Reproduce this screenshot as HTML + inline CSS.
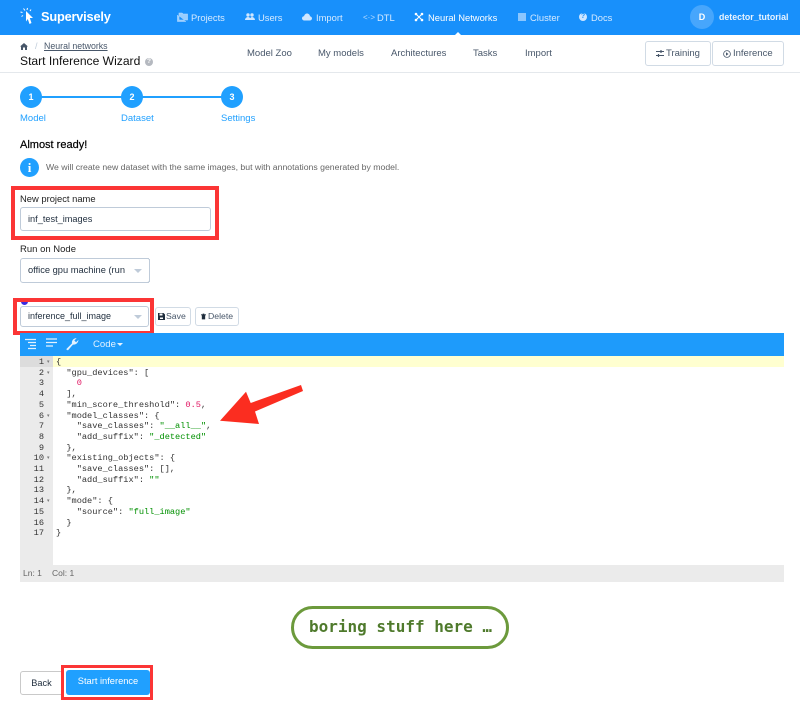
<!DOCTYPE html>
<html><head><meta charset="utf-8">
<style>
html,body{margin:0;padding:0;background:#fff}
#p{position:relative;width:800px;height:705px;overflow:hidden;font-family:"Liberation Sans",sans-serif;font-size:9px;color:#48576a;background:#fff;filter:blur(.3px)}
.a{position:absolute;white-space:nowrap}
.nav{color:#d6eaff;font-size:9.4px;top:12px;line-height:11px}
.sub{color:#48576a;font-size:9.5px;top:48px;line-height:12px}
.btn{position:absolute;box-sizing:border-box;border:1px solid #d1dbe5;border-radius:3px;background:#fff;font-size:9px;color:#1f2d3d;text-align:center}
.inp{position:absolute;box-sizing:border-box;border:1px solid #bfcbd9;border-radius:3px;background:#fff;font-size:9.3px;color:#1f2d3d;padding-left:7px}
.circ{position:absolute;width:22px;height:22px;border-radius:50%;background:#20a0ff;color:#fff;font-size:9px;font-weight:bold;text-align:center;line-height:22px;top:86px}
.stp{position:absolute;top:113px;font-size:9.5px;color:#20a0ff;line-height:11px}
.red{position:absolute;box-sizing:border-box;border:3px solid #fb3535}
.tri{position:absolute;width:0;height:0;border-left:4px solid transparent;border-right:4px solid transparent;border-top:4px solid #bfcbd9}
#gut{position:absolute;left:20px;top:356px;width:33px;height:209px;background:#ebebeb}
#act{position:absolute;left:53px;top:356px;width:731px;height:11px;background:#ffffd0}
#actg{position:absolute;left:20px;top:356px;width:33px;height:11px;background:#dcdcdc}
.ln{position:absolute;left:20px;width:24px;text-align:right;font:8.65px/10.7px "Liberation Mono",monospace;color:#333}
.cd{position:absolute;left:56px;font:8.65px/10.7px "Liberation Mono",monospace;color:#333;white-space:pre}
.s{color:#009000}.n{color:#e0115f}
.f{position:absolute;left:47px;font-size:5px;color:#777;line-height:10.7px}
</style></head><body><div id="p">

<div class="a" style="left:0;top:0;width:800px;height:35px;background:#1890fb"></div>
<svg class="a" style="left:20px;top:7px" width="15" height="19" viewBox="0 0 15 19"><path d="M6 4 L13 11 L9.800 11 L11.500 16 L9.500 17 L7.800 12 L6 14.500Z" fill="#fff"/><path d="M5 3.500 L3.500 1.500 M2.500 5.500 L0.500 5 M3 8.500 L1.500 9.500 M7 3 L7.500 1 M10 4 L11 2.500" stroke="#fff" stroke-width="1"/></svg>
<div class="a" style="left:41px;top:9px;font-size:12.8px;line-height:16px;font-weight:bold;color:#fff;letter-spacing:-.2px">Supervisely</div>

<svg class="a" style="left:177px;top:12px" width="11" height="10" viewBox="0 0 11 10"><path d="M2 1h3l1 1h4.500v6H2z M0.500 3v6.500h8.500" fill="#b9dcff" stroke="#b9dcff" stroke-width=".6" fill-opacity=".8"/></svg>
<div class="a nav" style="left:191px">Projects</div>
<svg class="a" style="left:245px;top:13px" width="10" height="8" viewBox="0 0 10 8"><circle cx="3" cy="2" r="1.700" fill="#cfe6ff"/><circle cx="7" cy="2" r="1.700" fill="#cfe6ff"/><path d="M0 7c0-2 2-3 3-3s3 1 3 3zM5 7c0-2 1-3 2-3s3 1 3 3z" fill="#cfe6ff"/></svg>
<div class="a nav" style="left:258px">Users</div>
<svg class="a" style="left:302px;top:13px" width="10" height="8" viewBox="0 0 10 8"><path d="M2.500 7.500C1 7.500 0 6.500 0 5.200 0 4 1 3.200 2 3.200 2.500 1.500 3.700.5 5 .5c1.600 0 2.800 1.200 3 2.700 1 .2 2 1 2 2.200 0 1.200-1 2.100-2.200 2.100z" fill="#cfe6ff"/></svg>
<div class="a nav" style="left:316px">Import</div>
<div class="a nav" style="left:363px;font-size:8px;color:#b9dcff">&lt;·&gt;</div>
<div class="a nav" style="left:377px">DTL</div>
<svg class="a" style="left:414px;top:12px" width="10" height="10" viewBox="0 0 10 10"><path d="M2 2L8 8M8 2L2 8" stroke="#fff" stroke-width="1"/><circle cx="2" cy="2" r="1.300" fill="#fff"/><circle cx="8" cy="2" r="1.300" fill="#fff"/><circle cx="2" cy="8" r="1.300" fill="#fff"/><circle cx="8" cy="8" r="1.300" fill="#fff"/></svg>
<div class="a nav" style="left:428px;color:#fff">Neural Networks</div>
<div class="a" style="left:455px;top:32px;width:0;height:0;border-left:3px solid transparent;border-right:3px solid transparent;border-bottom:3px solid #fff"></div>
<svg class="a" style="left:518px;top:13px" width="8" height="8" viewBox="0 0 8 8"><path d="M0 1h8M0 3h8M0 5h8M0 7h8" stroke="#cfe6ff" stroke-width="1.200"/></svg>
<div class="a nav" style="left:530px">Cluster</div>
<div class="a" style="left:579px;top:13px;width:8px;height:8px;border-radius:50%;background:#cfe6ff;color:#1890fb;font-size:7px;font-weight:bold;line-height:8px;text-align:center">?</div>
<div class="a nav" style="left:591px">Docs</div>
<div class="a" style="left:690px;top:5px;width:24px;height:24px;border-radius:50%;background:#47a6fc;color:#fff;font-size:9px;font-weight:bold;text-align:center;line-height:24px">D</div>
<div class="a" style="left:719px;top:12px;font-size:8.8px;line-height:11px;font-weight:bold;color:#e8f3ff">detector_tutorial</div>

<div class="a" style="left:0;top:72px;width:800px;height:1px;background:#e4e8ec"></div>
<svg class="a" style="left:20px;top:43px" width="8" height="7" viewBox="0 0 8 7"><path d="M4 0L8 3.500H7V7H5V4.500H3V7H1V3.500H0z" fill="#48576a"/></svg>
<div class="a" style="left:35px;top:41px;color:#bfcbd9;font-size:9px;line-height:11px">/</div>
<div class="a" style="left:44px;top:41px;font-size:8.8px;line-height:11px;color:#48576a;text-decoration:underline">Neural networks</div>
<div class="a" style="left:20px;top:54px;font-size:12.1px;line-height:15px;color:#111">Start Inference Wizard</div>
<div class="a" style="left:145px;top:58px;width:8px;height:8px;border-radius:50%;background:#b5b9c0;color:#fff;font-size:6.500px;font-weight:bold;line-height:8px;text-align:center">?</div>

<div class="a sub" style="left:247px">Model Zoo</div>
<div class="a sub" style="left:318px">My models</div>
<div class="a sub" style="left:391px">Architectures</div>
<div class="a sub" style="left:473px">Tasks</div>
<div class="a sub" style="left:525px">Import</div>

<div class="btn" style="left:645px;top:41px;width:66px;height:25px;line-height:24px;font-size:9.500px;padding-left:10px;text-align:left;color:#48576a"><svg style="position:absolute;left:10px;top:8px" width="8" height="7" viewBox="0 0 8 7"><path d="M0 1.500h8M0 5.500h8" stroke="#48576a" stroke-width="1"/><path d="M5 0v3M2.500 4v3" stroke="#48576a" stroke-width="1.200"/></svg><span style="margin-left:10px">Training</span></div>
<div class="btn" style="left:712px;top:41px;width:72px;height:25px;line-height:24px;font-size:9.500px;text-align:left;color:#48576a"><svg style="position:absolute;left:10px;top:8px" width="8" height="8" viewBox="0 0 8 8"><circle cx="4" cy="4" r="3.400" fill="none" stroke="#48576a" stroke-width=".8"/><path d="M3 2.300L5.500 4 3 5.700z" fill="#48576a"/></svg><span style="margin-left:20px">Inference</span></div>

<div class="a" style="left:31px;top:96px;width:202px;height:2px;background:#20a0ff"></div>
<div class="circ" style="left:20px">1</div>
<div class="circ" style="left:121px">2</div>
<div class="circ" style="left:221px">3</div>
<div class="stp" style="left:20px">Model</div>
<div class="stp" style="left:121px">Dataset</div>
<div class="stp" style="left:221px">Settings</div>

<div class="a" style="left:20px;top:139px;font-size:11px;line-height:13px;color:#000;-webkit-text-stroke:.2px #000">Almost ready!</div>
<div class="a" style="left:20px;top:158px;width:19px;height:19px;border-radius:50%;background:#20a0ff;color:#fff;font:bold 13px/19px 'Liberation Serif',serif;text-align:center">i</div>
<div class="a" style="left:46px;top:162px;font-size:8.7px;line-height:11px;color:#666">We will create new dataset with the same images, but with annotations generated by model.</div>

<div class="a" style="left:20px;top:193px;font-size:9.4px;line-height:12px;color:#222">New project name</div>
<div class="inp" style="left:20px;top:207px;width:191px;height:24px;line-height:22px;font-size:9.2px">inf_test_images</div>
<div class="red" style="left:11px;top:186px;width:208px;height:54px;border-width:4px"></div>

<div class="a" style="left:20px;top:244px;font-size:9.5px;line-height:12px;color:#222">Run on Node</div>
<div class="inp" style="left:20px;top:258px;width:130px;height:25px;line-height:23px">office gpu machine (run</div>
<div class="a" style="left:126px;top:258px;width:23px;height:24px;background:#fff;border-radius:3px"></div>
<div class="a" style="left:149px;top:259px;width:1px;height:23px;background:#bfcbd9"></div>
<div class="a" style="left:126px;top:258px;width:23px;height:1px;background:#bfcbd9"></div>
<div class="a" style="left:126px;top:282px;width:23px;height:1px;background:#bfcbd9"></div>
<div class="tri" style="left:134px;top:269px"></div>

<div class="a" style="left:21px;top:298px;width:7px;height:7px;border-radius:50%;background:#3a2ce0"></div>
<div class="inp" style="left:20px;top:306px;width:129px;height:21px;line-height:19px;font-size:9px">inference_full_image</div>
<div class="tri" style="left:134px;top:315px"></div>
<div class="red" style="left:13px;top:298px;width:141px;height:37px;border-width:4px"></div>
<div class="btn" style="left:155px;top:307px;width:36px;height:19px;line-height:17px;text-align:left;color:#48576a;font-size:8.7px"><svg style="position:absolute;left:2px;top:5px" width="7" height="7" viewBox="0 0 7 7"><path d="M0 0h5.500L7 1.500V7H0z" fill="#1f2d3d"/><path d="M1.500 .5h3v2h-3z M2 4.500h3v1.500H2z" fill="#fff"/></svg><span style="margin-left:10px">Save</span></div>
<div class="btn" style="left:195px;top:307px;width:44px;height:19px;line-height:17px;text-align:left;color:#48576a;font-size:8.7px"><svg style="position:absolute;left:5px;top:5px" width="5" height="7" viewBox="0 0 6 7"><path d="M0 1h6v1H0zM1 2h4v5H1zM2 0h2v1H2z" fill="#1f2d3d"/></svg><span style="margin-left:12px">Delete</span></div>

<div class="a" style="left:20px;top:333px;width:764px;height:23px;background:#1e9bfb"></div>
<svg class="a" style="left:25px;top:338px" width="12" height="12" viewBox="0 0 12 12"><path d="M0 1.500h11M3 4.500h8M5 7.500h6M3 10.500h8" stroke="#e3f2ff" stroke-width="1.200"/></svg>
<svg class="a" style="left:46px;top:338px" width="12" height="10" viewBox="0 0 12 10"><path d="M0 1h11M0 4.500h11M0 8h7" stroke="#e3f2ff" stroke-width="1.200"/></svg>
<svg class="a" style="left:65px;top:337px" width="14" height="14" viewBox="0 0 12 12"><path d="M1 10.500L6 5.500C5.500 3.500 7 1 10 1L8 3l1.500 1.500L11.500 2.500C11.500 5 9 7 6.800 6.500L2.500 11.500z" fill="#e3f2ff"/></svg>
<div class="a" style="left:93px;top:338.500px;font-size:9.6px;line-height:12px;color:#e3f2ff">Code</div>
<div class="a" style="left:117px;top:343px;width:0;height:0;border-left:3px solid transparent;border-right:3px solid transparent;border-top:3px solid #e3f2ff"></div>

<div id="gut"></div><div id="actg"></div><div id="act"></div>
<div class="ln" style="top:357px">1</div><div class="ln" style="top:367.700px">2</div><div class="ln" style="top:378.400px">3</div><div class="ln" style="top:389.100px">4</div><div class="ln" style="top:399.800px">5</div><div class="ln" style="top:410.500px">6</div><div class="ln" style="top:421.200px">7</div><div class="ln" style="top:431.900px">8</div><div class="ln" style="top:442.600px">9</div><div class="ln" style="top:453.300px">10</div><div class="ln" style="top:464px">11</div><div class="ln" style="top:474.700px">12</div><div class="ln" style="top:485.400px">13</div><div class="ln" style="top:496.100px">14</div><div class="ln" style="top:506.800px">15</div><div class="ln" style="top:517.500px">16</div><div class="ln" style="top:528.200px">17</div>
<div class="f" style="top:357px">▾</div><div class="f" style="top:367.700px">▾</div><div class="f" style="top:410.500px">▾</div><div class="f" style="top:453.300px">▾</div><div class="f" style="top:496.100px">▾</div>
<div class="cd" style="top:357px">{
  "gpu_devices": [
    <span class="n">0</span>
  ],
  "min_score_threshold": <span class="n">0.5</span>,
  "model_classes": {
    "save_classes": <span class="s">"__all__"</span>,
    "add_suffix": <span class="s">"_detected"</span>
  },
  "existing_objects": {
    "save_classes": [],
    "add_suffix": <span class="s">""</span>
  },
  "mode": {
    "source": <span class="s">"full_image"</span>
  }
}</div>
<div class="a" style="left:20px;top:565px;width:764px;height:17px;background:#ebebeb;font-size:8.500px;line-height:17px;color:#666"><span style="position:absolute;left:3px">Ln: 1</span><span style="position:absolute;left:32px">Col: 1</span></div>

<svg class="a" style="left:215px;top:380px" width="95" height="50" viewBox="215 380 95 50"><path d="M301 385L303 391L255 411.500L259 424L220 420.700L246 391.700L250.700 403z" fill="#fb2d20"/></svg>

<div class="a" style="left:291px;top:606px;width:218px;height:43px;box-sizing:border-box;border:3px solid #6c9a3c;border-radius:22px"></div>
<div class="a" style="left:309px;top:617px;font:bold 16px/19px 'DejaVu Sans Mono',monospace;color:#4f7a2c">boring stuff here …</div>

<div class="btn" style="left:20px;top:671px;width:43px;height:24px;line-height:22px;color:#1f2d3d;border-color:#c9c9c9;font-size:9.2px">Back</div>
<div class="a" style="left:66px;top:670px;width:84px;height:25px;background:#20a0ff;border-radius:3px;color:#fff;font-size:9.3px;line-height:23px;text-align:center">Start inference</div>
<div class="red" style="left:61px;top:665px;width:92px;height:35px"></div>
</div></body></html>
